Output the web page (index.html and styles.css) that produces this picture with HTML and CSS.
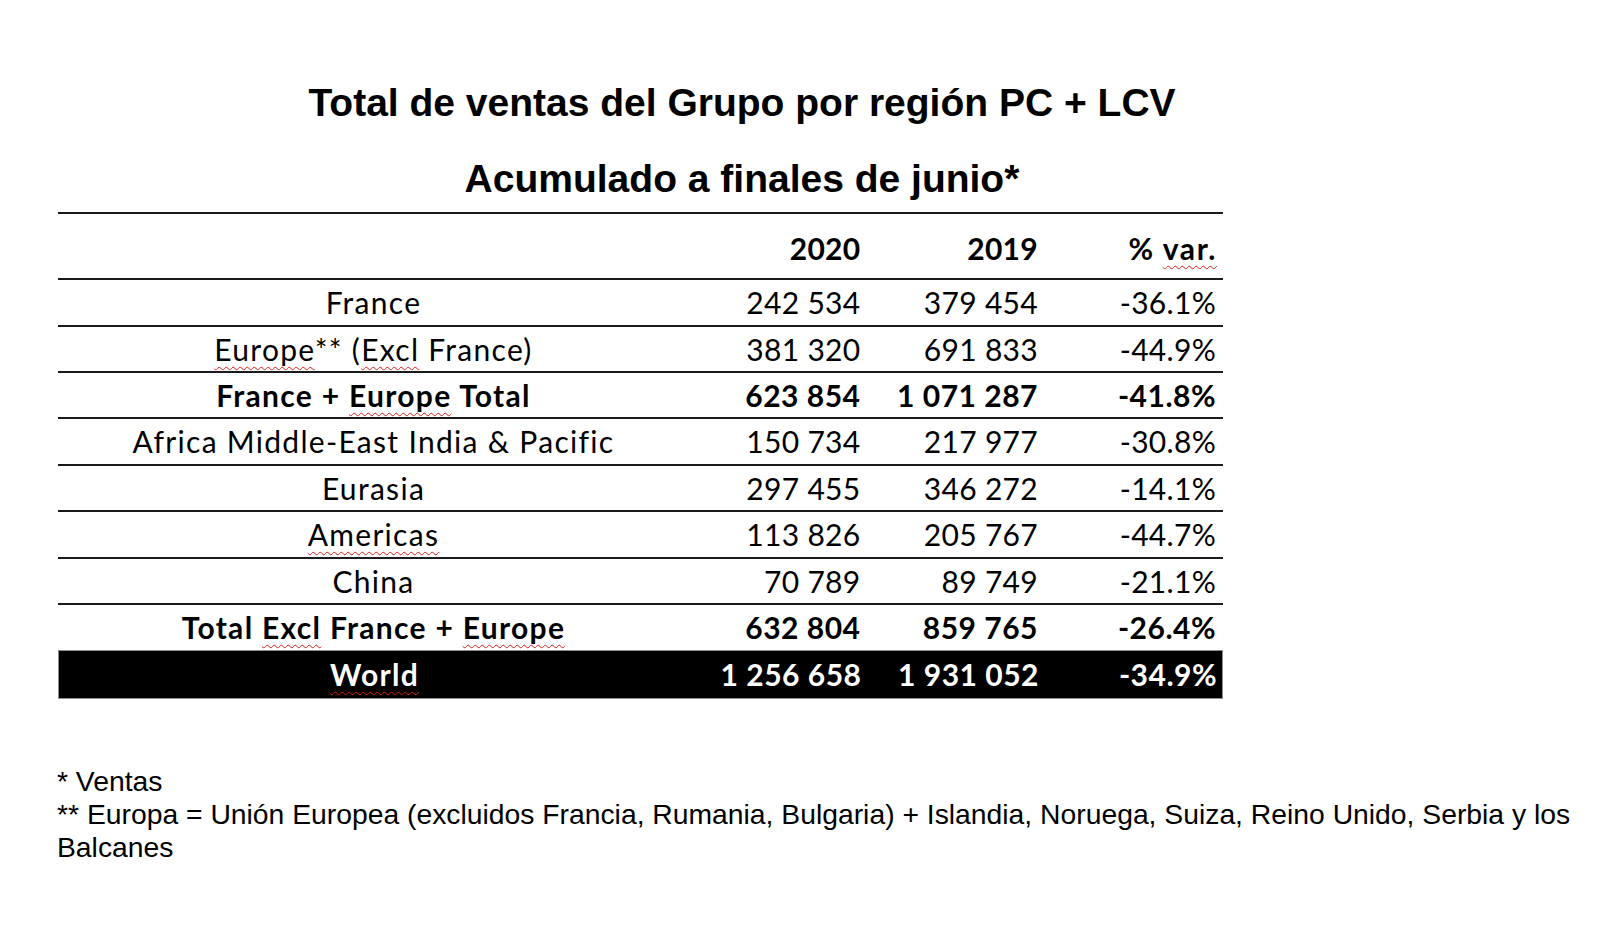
FILE: index.html
```html
<!DOCTYPE html>
<html lang="es">
<head>
<meta charset="utf-8">
<title>Total de ventas del Grupo por región PC + LCV</title>
<link rel="stylesheet" href="styles.css">
</head>
<body>
<div class="page">
  <header class="titles">
    <h1 class="title">Total de ventas del Grupo por región PC + LCV</h1>
    <h2 class="title">Acumulado a finales de junio*</h2>
  </header>

  <div class="sales">
    <div class="row head">
      <div class="cell label"></div>
      <div class="cell num">2020</div>
      <div class="cell num">2019</div>
      <div class="cell num pct">% <span class="sq">var.</span></div>
    </div>
    <div class="row">
      <div class="cell label">France</div>
      <div class="cell num">242 534</div>
      <div class="cell num">379 454</div>
      <div class="cell num">-36.1%</div>
    </div>
    <div class="row">
      <div class="cell label"><span class="sq">Europe</span>** (<span class="sq">Excl</span> France)</div>
      <div class="cell num">381 320</div>
      <div class="cell num">691 833</div>
      <div class="cell num">-44.9%</div>
    </div>
    <div class="row bold">
      <div class="cell label">France + <span class="sq">Europe</span> Total</div>
      <div class="cell num">623 854</div>
      <div class="cell num">1 071 287</div>
      <div class="cell num">-41.8%</div>
    </div>
    <div class="row">
      <div class="cell label">Africa Middle-East India &amp; Pacific</div>
      <div class="cell num">150 734</div>
      <div class="cell num">217 977</div>
      <div class="cell num">-30.8%</div>
    </div>
    <div class="row">
      <div class="cell label">Eurasia</div>
      <div class="cell num">297 455</div>
      <div class="cell num">346 272</div>
      <div class="cell num">-14.1%</div>
    </div>
    <div class="row">
      <div class="cell label"><span class="sq">Americas</span></div>
      <div class="cell num">113 826</div>
      <div class="cell num">205 767</div>
      <div class="cell num">-44.7%</div>
    </div>
    <div class="row">
      <div class="cell label">China</div>
      <div class="cell num">70 789</div>
      <div class="cell num">89 749</div>
      <div class="cell num">-21.1%</div>
    </div>
    <div class="row bold last">
      <div class="cell label">Total <span class="sq">Excl</span> France + <span class="sq">Europe</span></div>
      <div class="cell num">632 804</div>
      <div class="cell num">859 765</div>
      <div class="cell num">-26.4%</div>
    </div>
    <div class="row bold world">
      <div class="cell label"><span class="sq">World</span></div>
      <div class="cell num">1 256 658</div>
      <div class="cell num">1 931 052</div>
      <div class="cell num">-34.9%</div>
    </div>
  </div>

  <div class="notes">
    <p>* Ventas</p>
    <p>** Europa = Unión Europea (excluidos Francia, Rumania, Bulgaria) + Islandia, Noruega, Suiza, Reino Unido, Serbia y los<br>Balcanes</p>
  </div>
</div>
</body>
</html>
```

FILE: styles.css
```css
html, body {
  margin: 0;
  padding: 0;
  background: #ffffff;
  color: #000000;
}

.page {
  padding: 81px 0 0 58px;
}

.titles {
  width: 1368px;
  display: flex;
  flex-direction: column;
  align-items: center;
  gap: 32px;
}

.title {
  margin: 0;
  font-family: "Liberation Sans", Arial, sans-serif;
  font-weight: bold;
  font-size: 39px;
  line-height: 44px;
  white-space: nowrap;
}

.sales {
  margin-top: 10.7px;
  width: 1165px;
  border-top: 2px solid #1a1a1a;
  font-family: Lato, "Open Sans", sans-serif;
  font-size: 30px;
}

.row {
  display: grid;
  grid-template-columns: 631px 178.5px 177.5px 178px;
  height: 44.4px;
  line-height: 44.4px;
  border-bottom: 2px solid #1a1a1a;
}

.row.head {
  height: 64.6px;
  font-weight: bold;
  align-items: end;
}

.row.head .cell {
  padding-bottom: 8.2px;
}

.cell {
  white-space: nowrap;
}

.label {
  text-align: center;
  letter-spacing: 1.3px;
}

.num {
  text-align: right;
  padding-right: 7px;
  letter-spacing: 0.3px;
}

.bold {
  font-weight: bold;
}

.bold .num {
  letter-spacing: 0.5px;
}

.row.head .pct {
  letter-spacing: 1.6px;
  padding-right: 6px;
}

.row.last {
  border-bottom: none;
  height: 45.4px;
}

.row.world {
  background: #000000;
  color: #ffffff;
  height: 46.7px;
  line-height: 46.7px;
  border: 1px solid #8c8c8c;
}

.sq {
  text-decoration-line: underline;
  text-decoration-style: wavy;
  text-decoration-color: #e01b1b;
  text-decoration-thickness: 1.25px;
  text-underline-offset: 5px;
  text-decoration-skip-ink: none;
}

.notes {
  margin-top: 66px;
  margin-left: -1px;
  font-family: "Liberation Sans", Arial, sans-serif;
  font-size: 28.3px;
  line-height: 33px;
}

.notes p {
  margin: 0;
  white-space: nowrap;
}
```
